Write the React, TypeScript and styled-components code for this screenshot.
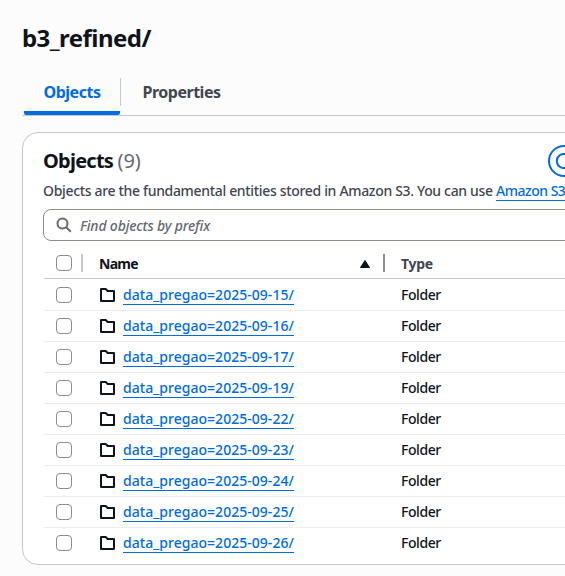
import React from "react";
import styled, { createGlobalStyle } from "styled-components";

const GlobalStyle = createGlobalStyle`
  *, *::before, *::after { box-sizing: border-box; }
  html, body { margin: 0; padding: 0; background: #fcfcfd; overflow: hidden; }
  body {
    font-family: "Noto Sans", "Open Sans", sans-serif;
    font-size: 14px;
    font-weight: 500;
    color: #0f141a;
    -webkit-font-smoothing: antialiased;
  }
`;

const Page = styled.main`
  width: 565px;
  height: 576px;
  padding: 22px 0 0 22px;
  overflow: hidden;
`;

const Title = styled.h1`
  margin: 0;
  height: 32px;
  font-size: 24px;
  line-height: 32px;
  font-weight: 700;
  letter-spacing: -0.55px;
  white-space: nowrap;
`;

const Tabs = styled.nav`
  display: flex;
  height: 46px;
  margin-top: 16px;
  border-bottom: 1px solid #c6c6cd;
`;

const Tab = styled.button<{ $active?: boolean }>`
  height: 45px;
  width: ${(p) => (p.$active ? "96px" : "121px")};
  margin-left: ${(p) => (p.$active ? "2px" : "0")};
  padding: 3px 0 0;
  border: 0;
  border-bottom: 4px solid ${(p) => (p.$active ? "#006ce0" : "transparent")};
  border-radius: 2px;
  background: none;
  color: ${(p) => (p.$active ? "#006ce0" : "#424650")};
  font-family: inherit;
  font-size: 16px;
  font-weight: 700;
  line-height: 20px;
  letter-spacing: -0.48px;
  white-space: nowrap;
`;

const TabDivider = styled.span`
  width: 1px;
  height: 28px;
  margin-top: 8px;
  background: #c6c6cd;
`;

const Card = styled.section`
  width: 700px;
  height: 433px;
  margin-top: 16px;
  padding: 12px 20px 0;
  border: 1px solid #c6c6cd;
  border-radius: 16px;
  background: #fff;
`;

const CardHeader = styled.header`
  display: flex;
  height: 32px;
  align-items: center;
`;

const Heading = styled.h2`
  width: 505px;
  margin: 0;
  font-size: 20px;
  line-height: 24px;
  font-weight: 700;
  letter-spacing: -0.75px;
`;

const Count = styled.span`
  color: #656871;
  font-weight: 400;
  letter-spacing: -0.2px;
`;

const RefreshButton = styled.button`
  display: flex;
  flex: none;
  align-items: center;
  justify-content: center;
  width: 32px;
  height: 32px;
  padding: 0;
  border: 2px solid #006ce0;
  border-radius: 50%;
  background: #fff;
`;

const Description = styled.p`
  margin: 4px 0 0;
  height: 20px;
  color: #424650;
  font-size: 14px;
  line-height: 20px;
  letter-spacing: -0.33px;
  white-space: nowrap;
`;

const Link = styled.a`
  display: inline-block;
  height: 20px;
  border-bottom: 1px solid #006ce0;
  color: #006ce0;
  line-height: 20px;
  text-decoration: none;
`;

const InfoLink = styled(Link)`
  letter-spacing: -0.5px;
`;

const Search = styled.div`
  display: flex;
  align-items: center;
  gap: 9px;
  height: 32px;
  margin-top: 8px;
  padding-left: 12px;
  border: 1px solid #8c8c94;
  border-radius: 8px;
  color: #656871;
  font-style: italic;
  letter-spacing: -0.17px;

  svg { margin-right: -1px; }
`;

const HeaderRow = styled.div`
  display: grid;
  grid-template-columns: 55px 286px 1fr;
  align-items: center;
  height: 38px;
  margin-left: 1px;
  padding-top: 7px;
  border-bottom: 1px solid #c6c6cd;
`;

const HeaderCell = styled.div<{ $muted?: boolean }>`
  display: flex;
  align-items: center;
  height: 18px;
  padding-left: ${(p) => (p.$muted ? "16px" : "0")};
  color: ${(p) => (p.$muted ? "#424650" : "#0f141a")};
  font-weight: 700;
  line-height: 20px;
  letter-spacing: ${(p) => (p.$muted ? "-0.3px" : "-0.75px")};
`;

const HeaderLabel = styled.span`
  padding-top: 2px;
`;

const SelectCell = styled.div`
  display: flex;
  align-items: center;
  padding-left: 12px;
`;

const Divider = styled.i<{ $strong?: boolean }>`
  width: 2px;
  height: 18px;
  margin-left: ${(p) => (p.$strong ? "12px" : "9px")};
  background: ${(p) => (p.$strong ? "#8c8c94" : "#c6c6cd")};
`;

const SortIcon = styled.svg`
  margin-top: 2px;
  margin-left: auto;
`;

const Check = styled.input`
  appearance: none;
  width: 16px;
  height: 16px;
  margin: 0;
  border: 1px solid #8c8c94;
  border-radius: 4px;
  background: #fff;
`;

const Rows = styled.div`
  margin-left: 1px;
  padding-top: 1px;
`;

const Row = styled.div`
  display: grid;
  grid-template-columns: 55px 286px 1fr;
  align-items: center;
  height: 31px;
  border-bottom: 1px solid #ebebf0;
  &:last-child { border-bottom-color: transparent; }
`;

const NameCell = styled.div`
  display: flex;
  align-items: center;
  gap: 7px;
`;

const ObjectLink = styled(Link)`
  letter-spacing: 0.03px;
`;

const TypeCell = styled.div`
  height: 20px;
  padding-left: 16px;
  line-height: 20px;
  letter-spacing: -0.43px;
`;

const FolderIcon = () => (
  <svg width="17" height="16" viewBox="0 0 17 16" fill="none" stroke="#0f141a" strokeWidth="2" strokeLinejoin="round">
    <path d="M2 2h4.7l2 2H15v10H2z" />
  </svg>
);

const SearchIcon = () => (
  <svg width="16" height="16" viewBox="0 0 16 16" fill="none" stroke="#656871" strokeWidth="2">
    <circle cx="6.5" cy="6.5" r="5" />
    <path d="m10.1 10.1 4.7 4.7" />
  </svg>
);

const RefreshIcon = () => (
  <svg width="16" height="16" viewBox="0 0 16 16" fill="none" stroke="#006ce0" strokeWidth="2">
    <path d="M14.5 10A7 7 0 1 1 14.5 6M15 1v5h-5" />
  </svg>
);

const days = ["15", "16", "17", "19", "22", "23", "24", "25", "26"];

export default function App() {
  return (
    <>
      <GlobalStyle />
      <Page>
        <Title>b3_refined/</Title>
        <Tabs>
          <Tab $active>Objects</Tab>
          <TabDivider />
          <Tab>Properties</Tab>
        </Tabs>
        <Card>
          <CardHeader>
            <Heading>
              Objects <Count>({days.length})</Count>
            </Heading>
            <RefreshButton aria-label="Refresh">
              <RefreshIcon />
            </RefreshButton>
          </CardHeader>
          <Description>
            Objects are the fundamental entities stored in Amazon S3. You can use <InfoLink>Amazon S3</InfoLink>
          </Description>
          <Search>
            <SearchIcon />
            <span>Find objects by prefix</span>
          </Search>
          <HeaderRow>
            <SelectCell>
              <Check type="checkbox" aria-label="Select all" />
              <Divider />
            </SelectCell>
            <HeaderCell>
              <HeaderLabel>Name</HeaderLabel>
              <SortIcon width="12" height="10" viewBox="0 0 12 10">
                <path d="M6 1.5 10.5 8.5h-9z" fill="#0f141a" stroke="#0f141a" strokeLinejoin="round" />
              </SortIcon>
              <Divider $strong />
            </HeaderCell>
            <HeaderCell $muted>
              <HeaderLabel>Type</HeaderLabel>
            </HeaderCell>
          </HeaderRow>
          <Rows>
            {days.map((day) => (
              <Row key={day}>
                <SelectCell>
                  <Check type="checkbox" aria-label={`Select ${day}`} />
                </SelectCell>
                <NameCell>
                  <FolderIcon />
                  <ObjectLink>data_pregao=2025-09-{day}/</ObjectLink>
                </NameCell>
                <TypeCell>Folder</TypeCell>
              </Row>
            ))}
          </Rows>
        </Card>
      </Page>
    </>
  );
}
